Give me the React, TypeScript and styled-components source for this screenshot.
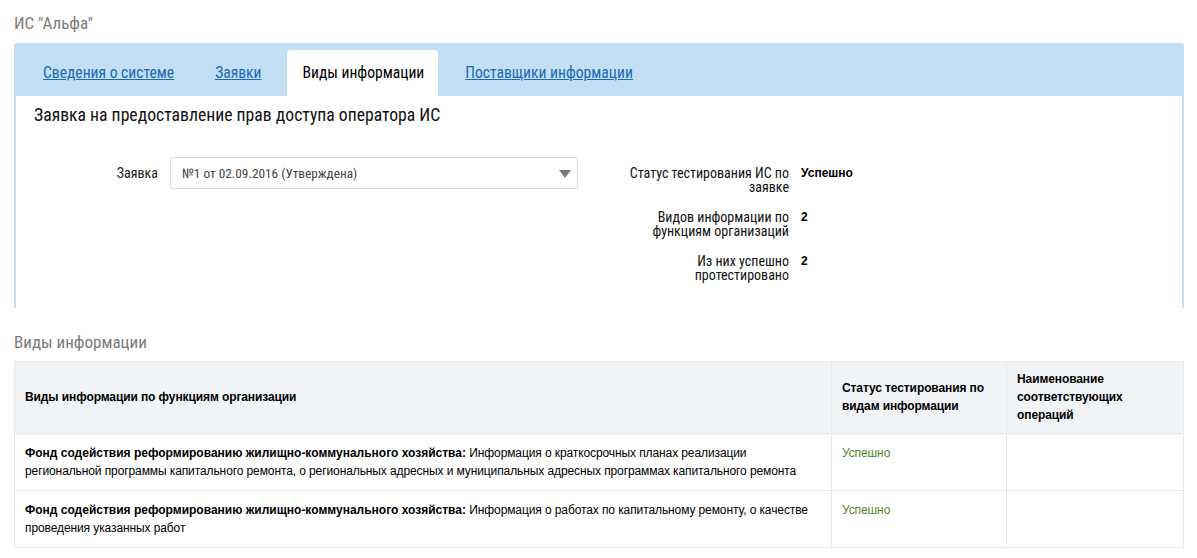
import React from 'react';
import styled, { createGlobalStyle } from 'styled-components';

const Narrow = '"Liberation Sans Narrow", "Roboto Condensed", "Arial Narrow", sans-serif';
const Plain = '"Liberation Sans", Arial, sans-serif';

const GlobalStyle = createGlobalStyle`
  html, body {
    margin: 0;
    padding: 0;
    background: #fff;
  }
  body {
    font-family: ${Plain};
    color: #000;
  }
  *, *::before, *::after {
    box-sizing: border-box;
  }
`;

const Page = styled.main`
  width: 1197px;
  padding: 12px 13px 0 14px;
`;

const PageTitle = styled.h1`
  margin: 0;
  height: 31px;
  font-family: ${Narrow};
  font-weight: normal;
  font-size: 17px;
  line-height: 22px;
  color: #7b7b7b;
`;

const TabBox = styled.section`
  background: #c2dff5;
  border-radius: 2px;
`;

const TabBar = styled.nav`
  display: flex;
  align-items: flex-end;
  height: 53px;
  padding-left: 14px;
`;

const Tab = styled.a<{ $active?: boolean }>`
  display: flex;
  align-items: center;
  height: 46px;
  padding: 0 14px 0 15px;
  margin-right: 12px;
  font-family: ${Narrow};
  font-size: 15.6px;
  color: ${(p) => (p.$active ? '#000' : '#1a6bb0')};
  text-decoration: ${(p) => (p.$active ? 'none' : 'underline')};
  background: ${(p) => (p.$active ? '#fff' : 'transparent')};
  border-radius: 4px 4px 0 0;
  cursor: pointer;
`;

const TabBody = styled.div`
  background: #fff;
  margin: 0 2px 2px 2px;
  height: 212px;
  padding: 9px 18px 0 18px;
`;

const Heading = styled.h2`
  margin: 0;
  font-family: ${Narrow};
  font-weight: normal;
  font-size: 17.7px;
  line-height: 20px;
  color: #111;
`;

const FormGrid = styled.div`
  display: flex;
  margin-top: 32px;
`;

const LeftCol = styled.div`
  width: 580px;
`;

const RightCol = styled.div`
  display: flex;
  flex-direction: column;
  gap: 16px;
  padding-top: 9px;
`;

const FieldRow = styled.div`
  display: flex;
  align-items: center;
`;

const FieldLabel = styled.label`
  width: 136px;
  text-align: right;
  padding-right: 12px;
  font-family: ${Narrow};
  font-size: 14px;
  color: #222;
`;

const Select = styled.div`
  position: relative;
  width: 408px;
  height: 32px;
  border: 1px solid #dcdcdc;
  border-radius: 2px;
  display: flex;
  align-items: center;
  padding-left: 11px;
  font-family: ${Narrow};
  font-size: 13.3px;
  color: #444;
`;

const Arrow = styled.span`
  position: absolute;
  right: 6px;
  top: 12px;
  width: 0;
  height: 0;
  border-left: 6px solid transparent;
  border-right: 6px solid transparent;
  border-top: 8px solid #777;
`;

const InfoRow = styled.div`
  display: flex;
  align-items: flex-start;
`;

const InfoLabel = styled.div`
  width: 175px;
  text-align: right;
  font-family: ${Narrow};
  font-size: 14px;
  line-height: 14px;
  color: #111;
`;

const InfoValue = styled.div`
  padding-left: 12px;
  font-family: ${Plain};
  font-weight: bold;
  font-size: 12px;
  line-height: 14px;
`;

const SectionTitle = styled.h2`
  margin: 0;
  padding: 21px 0 8px 0;
  font-family: ${Narrow};
  font-weight: normal;
  font-size: 17px;
  line-height: 22px;
  color: #7b7b7b;
`;

const Table = styled.table`
  width: 100%;
  table-layout: fixed;
  border-collapse: collapse;
  font-family: ${Plain};
  font-size: 12px;
  line-height: 18px;
  letter-spacing: -0.1px;
`;

const Th = styled.th<{ $width?: number }>`
  background: #f1f4f7;
  border: 1px solid #e6e9ec;
  text-align: left;
  font-weight: bold;
  padding: 8px 10px 9px 10px;
  height: 71px;
  width: ${(p) => (p.$width ? `${p.$width}px` : 'auto')};
`;

const Td = styled.td<{ $ok?: boolean }>`
  border: 1px solid #e6e9ec;
  vertical-align: top;
  padding: 10px 8px 10px 10px;
  height: 56px;
  color: ${(p) => (p.$ok ? '#4f8a1e' : '#000')};
`;

const OrgName = styled.b`
  letter-spacing: 0;
`;

const rows = [
  {
    org: 'Фонд содействия реформированию жилищно-коммунального хозяйства:',
    text: ' Информация о краткосрочных планах реализации региональной программы капитального ремонта, о региональных адресных и муниципальных адресных программах капитального ремонта',
    status: 'Успешно',
  },
  {
    org: 'Фонд содействия реформированию жилищно-коммунального хозяйства:',
    text: ' Информация о работах по капитальному ремонту, о качестве проведения указанных работ',
    status: 'Успешно',
  },
];

const info = [
  { label: 'Статус тестирования ИС по заявке', value: 'Успешно' },
  { label: 'Видов информации по функциям организаций', value: '2' },
  { label: 'Из них успешно протестировано', value: '2' },
];

const App = () => {
  return (
    <Page>
      <GlobalStyle />
      <PageTitle>ИС "Альфа"</PageTitle>
      <TabBox>
        <TabBar>
          <Tab>Сведения о системе</Tab>
          <Tab>Заявки</Tab>
          <Tab $active>Виды информации</Tab>
          <Tab>Поставщики информации</Tab>
        </TabBar>
        <TabBody>
          <Heading>Заявка на предоставление прав доступа оператора ИС</Heading>
          <FormGrid>
            <LeftCol>
              <FieldRow>
                <FieldLabel>Заявка</FieldLabel>
                <Select>
                  №1 от 02.09.2016 (Утверждена)
                  <Arrow />
                </Select>
              </FieldRow>
            </LeftCol>
            <RightCol>
              {info.map((item) => (
                <InfoRow key={item.label}>
                  <InfoLabel>{item.label}</InfoLabel>
                  <InfoValue>{item.value}</InfoValue>
                </InfoRow>
              ))}
            </RightCol>
          </FormGrid>
        </TabBody>
      </TabBox>
      <SectionTitle>Виды информации</SectionTitle>
      <Table>
        <thead>
          <tr>
            <Th>Виды информации по функциям организации</Th>
            <Th $width={175}>Статус тестирования по видам информации</Th>
            <Th $width={177}>Наименование соответствующих операций</Th>
          </tr>
        </thead>
        <tbody>
          {rows.map((row, index) => (
            <tr key={index}>
              <Td>
                <OrgName>{row.org}</OrgName>
                {row.text}
              </Td>
              <Td $ok>{row.status}</Td>
              <Td />
            </tr>
          ))}
        </tbody>
      </Table>
    </Page>
  );
};

export default App;
